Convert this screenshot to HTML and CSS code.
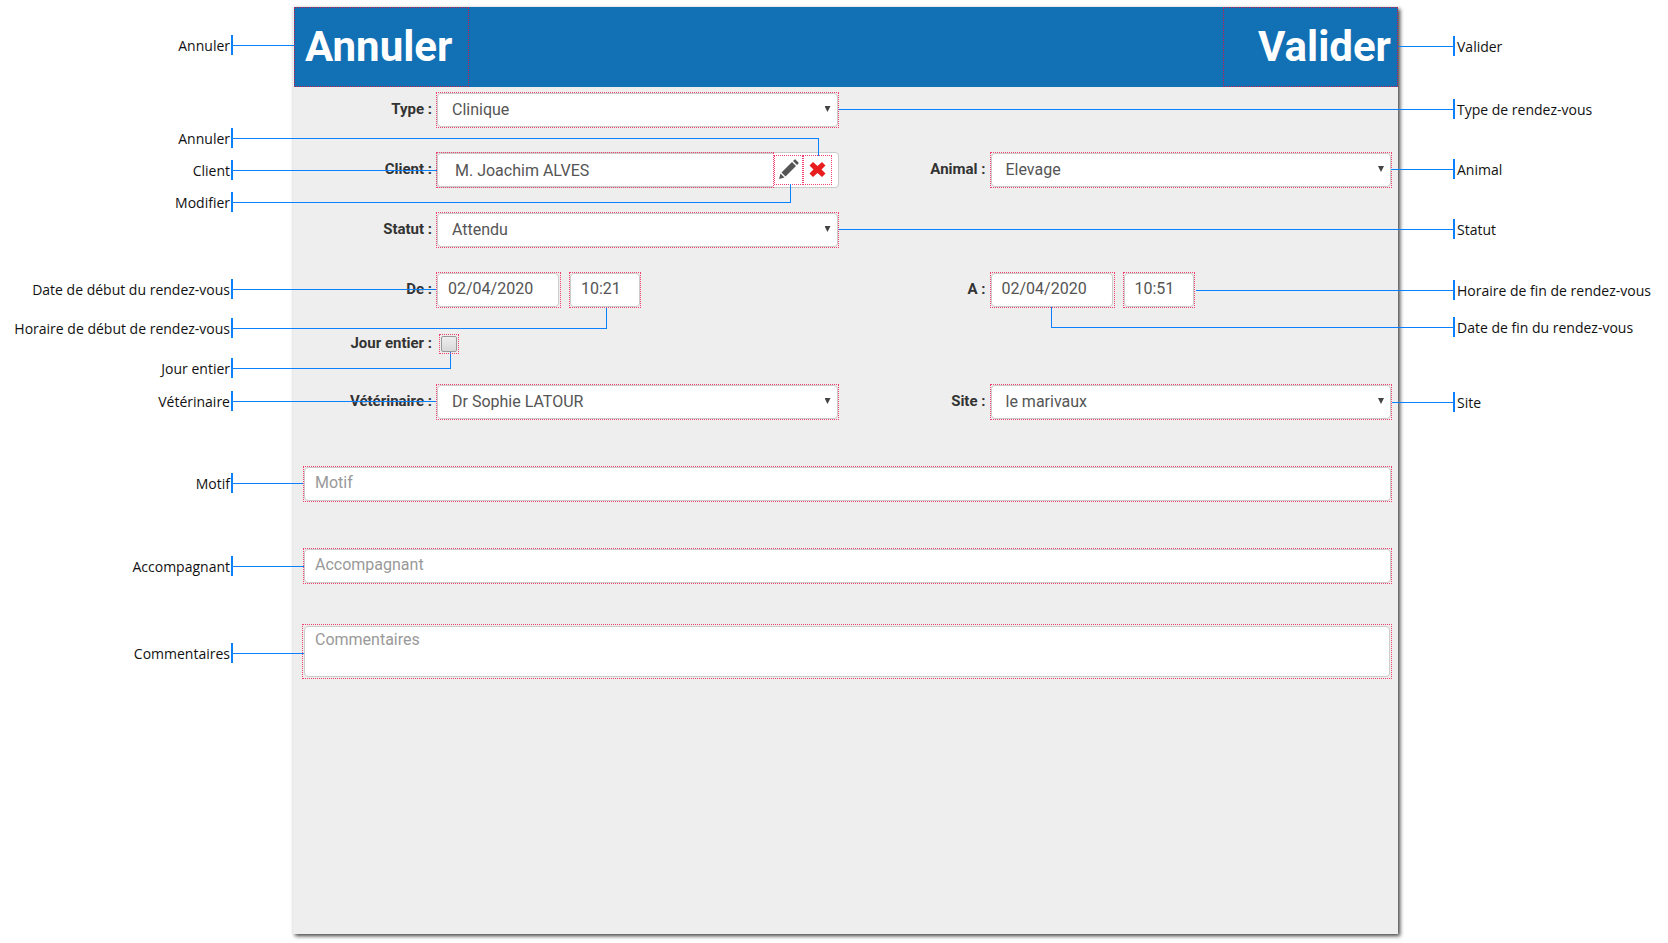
FILE: index.html
```
<!DOCTYPE html>
<html lang="fr">
<head>
<meta charset="utf-8">
<title>Rendez-vous</title>
<link rel="stylesheet" href="styles.css">
</head>
<body>
<div class="stage">
  <ul class="notes notes-left">
    <li class="note n-cancel">Annuler</li>
    <li class="note n-clear">Annuler</li>
    <li class="note n-client">Client</li>
    <li class="note n-edit">Modifier</li>
    <li class="note n-start-date">Date de début du rendez-vous</li>
    <li class="note n-start-time">Horaire de début de rendez-vous</li>
    <li class="note n-day">Jour entier</li>
    <li class="note n-vet">Vétérinaire</li>
    <li class="note n-motif">Motif</li>
    <li class="note n-with">Accompagnant</li>
    <li class="note n-comments">Commentaires</li>
  </ul>

  <form class="panel">
    <header class="bar">
      <button type="button" class="bar-btn">Annuler</button>
      <button type="button" class="bar-btn bar-btn-end">Valider</button>
    </header>
    <div class="rows">
      <div class="row">
        <div class="field">
          <label class="label" for="type">Type :</label>
          <div class="frame select"><select class="control" id="type"><option>Clinique</option></select></div>
        </div>
      </div>
      <div class="row">
        <div class="field">
          <label class="label" for="client">Client :</label>
          <div class="group">
            <div class="frame"><input class="control control-client" id="client" type="text" value="M. Joachim ALVES"></div>
            <button type="button" class="icon-btn" aria-label="Modifier">
              <svg width="21" height="21" viewBox="0 0 21 21" fill="#555"><path d="M1 20l1.500-5.500 4 4z"/><path d="M3.500 13.500L14 3l4 4L7.500 17.500z"/><path d="M15 2l1.300-1.300q.7-.7 1.400 0l2.600 2.600q.7.700 0 1.400L19 6z"/></svg>
            </button>
            <button type="button" class="icon-btn" aria-label="Annuler">
              <svg width="17" height="17" viewBox="0 0 17 17" fill="#e81c1c"><path d="M4 1l4.500 4L13 1l3.500 3.500-4 4 4 4L13 16l-4.500-4L4 16 .5 12.500l4-4-4-4z"/></svg>
            </button>
          </div>
        </div>
        <div class="field">
          <label class="label" for="animal">Animal :</label>
          <div class="frame select"><select class="control" id="animal"><option>Elevage</option></select></div>
        </div>
      </div>
      <div class="row">
        <div class="field">
          <label class="label" for="statut">Statut :</label>
          <div class="frame select"><select class="control" id="statut"><option>Attendu</option></select></div>
        </div>
      </div>
      <div class="row">
        <div class="field">
          <label class="label" for="de">De :</label>
          <div class="frame frame-date"><input class="control control-text" id="de" type="text" value="02/04/2020"></div>
          <div class="frame frame-time"><input class="control control-text" type="text" value="10:21" aria-label="Horaire de début"></div>
        </div>
        <div class="field">
          <label class="label" for="a">A :</label>
          <div class="frame frame-date"><input class="control control-text" id="a" type="text" value="02/04/2020"></div>
          <div class="frame frame-time"><input class="control control-text" type="text" value="10:51" aria-label="Horaire de fin"></div>
        </div>
      </div>
      <div class="row row-check">
        <div class="field">
          <label class="label" for="jour">Jour entier :</label>
          <div class="frame frame-check"><input class="check" id="jour" type="checkbox"></div>
        </div>
      </div>
      <div class="row">
        <div class="field">
          <label class="label" for="vet">Vétérinaire :</label>
          <div class="frame select"><select class="control" id="vet"><option>Dr Sophie LATOUR</option></select></div>
        </div>
        <div class="field">
          <label class="label" for="site">Site :</label>
          <div class="frame select"><select class="control" id="site"><option>le marivaux</option></select></div>
        </div>
      </div>
    </div>
    <div class="wide">
      <div class="frame"><input class="control control-text" type="text" placeholder="Motif" aria-label="Motif"></div>
      <div class="frame"><input class="control control-text" type="text" placeholder="Accompagnant" aria-label="Accompagnant"></div>
      <div class="frame frame-area"><textarea class="control control-text area" placeholder="Commentaires" aria-label="Commentaires"></textarea></div>
    </div>
  </form>

  <ul class="notes notes-right">
    <li class="note n-ok">Valider</li>
    <li class="note n-type">Type de rendez-vous</li>
    <li class="note n-animal">Animal</li>
    <li class="note n-status">Statut</li>
    <li class="note n-end-time">Horaire de fin de rendez-vous</li>
    <li class="note n-end-date">Date de fin du rendez-vous</li>
    <li class="note n-site">Site</li>
  </ul>
</div>
</body>
</html>
```

FILE: styles.css
```
* { box-sizing: border-box; }

body {
  margin: 0;
  background: #fff;
  font-family: Roboto, sans-serif;
  font-size: 16px;
  color: #555;
}

.stage {
  /* width of one of the two form columns */
  --half: calc((100vw - 563px) / 2);
  display: grid;
  grid-template-columns: 233px minmax(0, 1fr) 215px;
  min-height: 100vh;
  overflow: hidden;
}

/* Form panel */
.panel {
  margin: 7px 55px 9px 60px;
  background: #eee;
  box-shadow: 2px 2px 4px rgba(0, 0, 0, .75);
}

.bar {
  display: flex;
  justify-content: space-between;
  height: 80px;
  margin-left: 1px;
  background: #1270b5;
}

.bar-btn {
  width: 175px;
  padding: 0 10px;
  border: 1px dotted #c02050;
  background: none;
  color: #fff;
  font: bold 42px/48px Roboto, sans-serif;
  text-align: left;
}

.bar-btn-end { padding-right: 6px; text-align: right; }

.rows {
  display: flex;
  flex-direction: column;
  gap: 24px;
  padding-top: 5px;
}

.row {
  display: grid;
  grid-template-columns: 1fr 1fr;
  height: 36px;
}

.row-check { height: 28px; padding-bottom: 4px; }

.field {
  display: flex;
  align-items: center;
  padding-right: 7px;
}

.field + .field { padding: 0 6px 0 1px; }

.label {
  flex: none;
  width: 143px;
  padding: 0 4px 2px 0;
  color: #333;
  font-size: 15px;
  line-height: 20px;
  font-weight: bold;
  text-align: right;
}

.frame {
  position: relative;
  flex: 1;
  height: 36px;
  border: 1px dotted #f04070;
}

.frame-date { flex: none; width: 125px; padding-right: 1px; }
.frame-time { flex: none; width: 72px; margin-left: 8px; }

.frame-check {
  flex: none;
  width: 20px;
  height: 20px;
  margin-left: 3px;
  padding: 1px;
}

.control {
  display: block;
  width: 100%;
  height: 34px;
  margin: 0;
  padding: 0 14px;
  border: 1px solid #ccc;
  border-radius: 4px;
  background: #fff;
  color: #555;
  font: 16px/20px Roboto, sans-serif;
  appearance: none;
  outline: none;
}

.control-text { padding: 0 10px 4px; }
.control::placeholder { color: #999; opacity: 1; }

.select::after {
  content: "";
  position: absolute;
  right: 7px;
  top: 13px;
  width: 6px;
  height: 6px;
  background: #444;
  clip-path: polygon(0 0, 100% 0, 50% 100%);
}

.group {
  display: flex;
  flex: 1;
  align-items: center;
  padding-right: 7px;
  border-radius: 4px;
  background: #fff;
  box-shadow: inset 0 0 0 1px #ccc;
}

.control-client {
  padding: 0 17px;
  border-right: 0;
  border-radius: 4px 0 0 4px;
}

.icon-btn {
  display: grid;
  place-items: center;
  width: 29px;
  height: 30px;
  padding: 0 0 2px;
  border: 1px dotted #f04070;
  background: none;
}

.check {
  display: block;
  width: 16px;
  height: 16px;
  margin: 0;
  border: 1px solid #999;
  border-radius: 2px;
  background: linear-gradient(#eee, #d8d8d8);
  appearance: none;
}

.wide {
  display: flex;
  flex-direction: column;
  gap: 46px;
  padding: 46px 6px 0 10px;
}

.wide .frame { flex: none; }
.wide .frame-area { height: 55px; margin: -6px 0 0 -1px; padding: 1px; }
.area { height: 51px; padding-top: 3px; resize: none; }

/* Annotations around the panel */
.notes {
  margin: 0;
  padding: 0;
  list-style: none;
  color: #111;
  font: 14px/22px "Open Sans", "Noto Sans", sans-serif;
}

.note {
  position: relative;
  height: 20px;
  white-space: nowrap;
}

.notes-left .note { border-right: 2px solid #0a80ff; padding-right: 1px; text-align: right; }
.notes-right .note { border-left: 2px solid #0a80ff; padding-left: 2px; }

/* leader line: --run is its length, --drop the height of its elbow */
.note::after {
  content: "";
  position: absolute;
  top: 10px;
  width: var(--run);
  height: var(--drop, 1px);
  border-top: 1px solid #0a80ff;
}

.notes-left .note::after { left: calc(100% + 2px); }
.notes-right .note::after { right: calc(100% + 2px); }

.n-cancel { margin-top: 35px; --run: 62px; }
.n-clear { margin-top: 73px; --run: calc(var(--half) + 32px); --drop: 17px; }
.n-client { margin-top: 12px; --run: 204px; }
.n-edit { margin-top: 12px; --run: calc(var(--half) + 4px); --drop: 18px; }
.n-start-date { margin-top: 67px; --run: 204px; }
.n-start-time { margin-top: 19px; --run: 373px; --drop: 21px; }
.n-day { margin-top: 20px; --run: 217px; --drop: 17px; }
.n-vet { margin-top: 13px; --run: 204px; }
.n-motif { margin-top: 62px; --run: 72px; }
.n-with { margin-top: 63px; --run: 71px; }
.n-comments { margin-top: 67px; --run: 72px; }

.n-ok { margin-top: 36px; --run: 55px; }
.n-type { margin-top: 43px; --run: calc(var(--half) + 62px); }
.n-animal { margin-top: 40px; --run: 62px; }
.n-status { margin-top: 40px; --run: calc(var(--half) + 62px); }
.n-end-time { margin-top: 41px; --run: calc(var(--half) - 295px); }
.n-end-date { margin-top: 17px; --run: calc(var(--half) - 151px); --drop: 20px; }
.n-site { margin-top: 55px; --run: 61px; }

.notes .n-clear::after { border-right: 1px solid #0a80ff; }

/* elbows that rise from the line instead of falling */
.notes .n-edit::after,
.notes .n-start-time::after,
.notes .n-day::after,
.notes .n-end-date::after {
  top: auto;
  bottom: 9px;
  border-top: 0;
  border-bottom: 1px solid #0a80ff;
}

.notes .n-edit::after,
.notes .n-start-time::after,
.notes .n-day::after { border-right: 1px solid #0a80ff; }
.notes .n-end-date::after { border-left: 1px solid #0a80ff; }
```
